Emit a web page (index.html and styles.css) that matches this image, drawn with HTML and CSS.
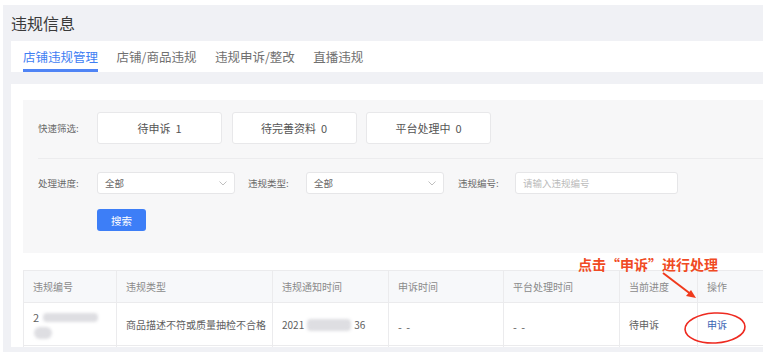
FILE: index.html
```html
<!DOCTYPE html>
<html lang="zh-CN">
<head>
    <meta charset="UTF-8">
    <title>违规信息</title>
    <link rel="stylesheet" href="styles.css">
</head>
<body>
<div class="page">
    <div class="title">违规信息</div>
    <div class="tabs">
        <div class="tab active">店铺违规管理</div>
        <div class="tab">店铺/商品违规</div>
        <div class="tab">违规申诉/整改</div>
        <div class="tab">直播违规</div>
    </div>
    <div class="panel">
        <div class="filter">
            <div class="row quick">
                <span class="label">快速筛选:</span>
                <div class="qbtn">待申诉&nbsp;&nbsp;1</div>
                <div class="qbtn">待完善资料&nbsp;&nbsp;0</div>
                <div class="qbtn">平台处理中&nbsp;&nbsp;0</div>
            </div>
            <div class="sep"></div>
            <div class="row fields">
                <span class="label">处理进度:</span>
                <div class="select">
                    <span>全部</span>
                    <svg width="8" height="5" viewBox="0 0 8 5"><path d="M0.5 0.5 L4 4 L7.5 0.5" fill="none" stroke="#b8b8b8" stroke-width="0.9"/></svg>
                </div>
                <span class="label second">违规类型:</span>
                <div class="select">
                    <span>全部</span>
                    <svg width="8" height="5" viewBox="0 0 8 5"><path d="M0.5 0.5 L4 4 L7.5 0.5" fill="none" stroke="#b8b8b8" stroke-width="0.9"/></svg>
                </div>
                <span class="label third">违规编号:</span>
                <div class="input">请输入违规编号</div>
            </div>
            <div class="search">搜索</div>
        </div>

        <table class="list">
            <colgroup>
                <col style="width:93px">
                <col style="width:156px">
                <col style="width:116px">
                <col style="width:115px">
                <col style="width:116px">
                <col style="width:78px">
                <col style="width:66px">
            </colgroup>
            <thead>
            <tr>
                <th>违规编号</th>
                <th>违规类型</th>
                <th>违规通知时间</th>
                <th>申诉时间</th>
                <th>平台处理时间</th>
                <th>当前进度</th>
                <th>操作</th>
            </tr>
            </thead>
            <tbody>
            <tr>
                <td>
                    <div class="idcell">
                        <div class="idline">2<span class="blur wide"></span></div>
                        <span class="blur blob"></span>
                    </div>
                </td>
                <td>商品描述不符或质量抽检不合格</td>
                <td>2021<span class="blur mid"></span>36</td>
                <td class="dash">- -</td>
                <td class="dash">- -</td>
                <td>待申诉</td>
                <td><span class="link">申诉</span></td>
            </tr>
            <tr class="next">
                <td></td><td></td><td></td><td></td><td></td><td></td><td></td>
            </tr>
            </tbody>
        </table>

        <!-- 标注 -->
        <div class="note">点击“申诉”进行处理</div>
        <svg class="marks" width="764" height="352" viewBox="0 0 764 352">
            <line x1="663" y1="273" x2="692" y2="295" stroke="#f03a1c" stroke-width="2"/>
            <path d="M696 298 L686 296 L691 290 Z" fill="#f03a1c"/>
            <ellipse cx="715" cy="328" rx="30" ry="15" fill="none" stroke="#ee2a20" stroke-width="1.6" transform="rotate(-3 715 328)"/>
        </svg>
    </div>
</div>
</body>
</html>
```

FILE: styles.css
```css
*{
    margin: 0;
    padding: 0;
    box-sizing: border-box;
}
body{
    background: #fff;
    font-family: "Noto Sans CJK SC", "Noto Sans", sans-serif;
    overflow: hidden;
    height: 352px;
}
.page{
    margin: 5px 1px 0 3px;
    padding-left: 8px;
    height: 347px;
    background: #f0f1f5;
    overflow: hidden;
}
.title{
    height: 36px;
    line-height: 36px;
    font-size: 16px;
    color: #3a3a3a;
}
.tabs{
    display: flex;
    gap: 18.5px;
    height: 31px;
    padding-left: 12px;
    background: #fff;
}
.tab{
    display: flex;
    align-items: center;
    height: 31px;
    padding-top: 3px;
    border-bottom: 3px solid transparent;
    font-size: 12.5px;
    color: #707070;
}
.tab.active{
    color: #3f7ef3;
    border-bottom-color: #4f84f5;
}
.panel{
    position: relative;
    margin-top: 12px;
    padding: 16px 0 0 12px;
    height: 263px;
    background: #fff;
    overflow: hidden;
}
.filter{
    padding: 12px 0 22px 15px;
    background: #f7f7f8;
}
.row{
    display: flex;
    align-items: center;
}
.quick{
    height: 32px;
}
.label{
    width: 59px;
    font-size: 9.5px;
    color: #6a6a6a;
}
.label.second{
    width: 58px;
    margin-left: 13px;
}
.label.third{
    width: 57px;
    margin-left: 14px;
}
.qbtn{
    display: flex;
    align-items: center;
    justify-content: center;
    width: 125px;
    height: 32px;
    margin-right: 9.5px;
    background: #fff;
    border: 1px solid #e8e8ea;
    border-radius: 3px;
    font-size: 11px;
    color: #555;
}
.sep{
    height: 1px;
    margin: 14px 0 13px;
    background: #ececee;
}
.fields{
    height: 22px;
}
.select{
    display: flex;
    align-items: center;
    justify-content: space-between;
    width: 138px;
    height: 22px;
    padding: 0 7px;
    background: #fff;
    border: 1px solid #e6e6e8;
    border-radius: 3px;
    font-size: 9.5px;
    color: #666;
}
.input{
    display: flex;
    align-items: center;
    width: 163px;
    height: 22px;
    padding: 0 7px;
    background: #fff;
    border: 1px solid #e6e6e8;
    border-radius: 3px;
    font-size: 9.5px;
    color: #bbb;
}
.search{
    display: flex;
    align-items: center;
    justify-content: center;
    width: 49px;
    height: 22px;
    margin: 15px 0 0 59px;
    background: #3d7ef7;
    border-radius: 3px;
    font-size: 10.5px;
    color: #fff;
}
.list{
    width: 740px;
    margin-top: 17px;
    table-layout: fixed;
    border-collapse: collapse;
    font-size: 10px;
    color: #606060;
}
.list th,
.list td{
    padding-left: 9px;
    border: 1px solid #ebebed;
    text-align: left;
    white-space: nowrap;
    overflow: hidden;
}
.list th{
    height: 32px;
    font-weight: normal;
    color: #8a8a8a;
    background: #f7f8fa;
}
.list td{
    height: 43px;
}
.list .next td{
    height: 20px;
}
.dash{
    font-size: 11px;
    letter-spacing: 1px;
    padding-top: 6px;
}
.idcell{
    display: flex;
    flex-direction: column;
    gap: 2px;
}
.idline{
    display: flex;
    align-items: center;
    font-size: 11px;
}
.blur{
    display: inline-block;
    background: #dedee2;
    border-radius: 4px;
    filter: blur(1.5px);
}
.blur.wide{
    width: 55px;
    height: 9px;
    margin-left: 4px;
}
.blur.blob{
    width: 18px;
    height: 12px;
    border-radius: 6px;
    margin-left: 1px;
}
.blur.mid{
    width: 44px;
    height: 12px;
    margin: 0 3px -2px 3px;
}
.link{
    color: #3a64b4;
}
.note{
    position: absolute;
    left: 567px;
    top: 172px;
    font-size: 14px;
    font-weight: bold;
    line-height: 16px;
    color: #f04a23;
}
.marks{
    position: absolute;
    left: -11px;
    top: -84px;
    pointer-events: none;
}
```
